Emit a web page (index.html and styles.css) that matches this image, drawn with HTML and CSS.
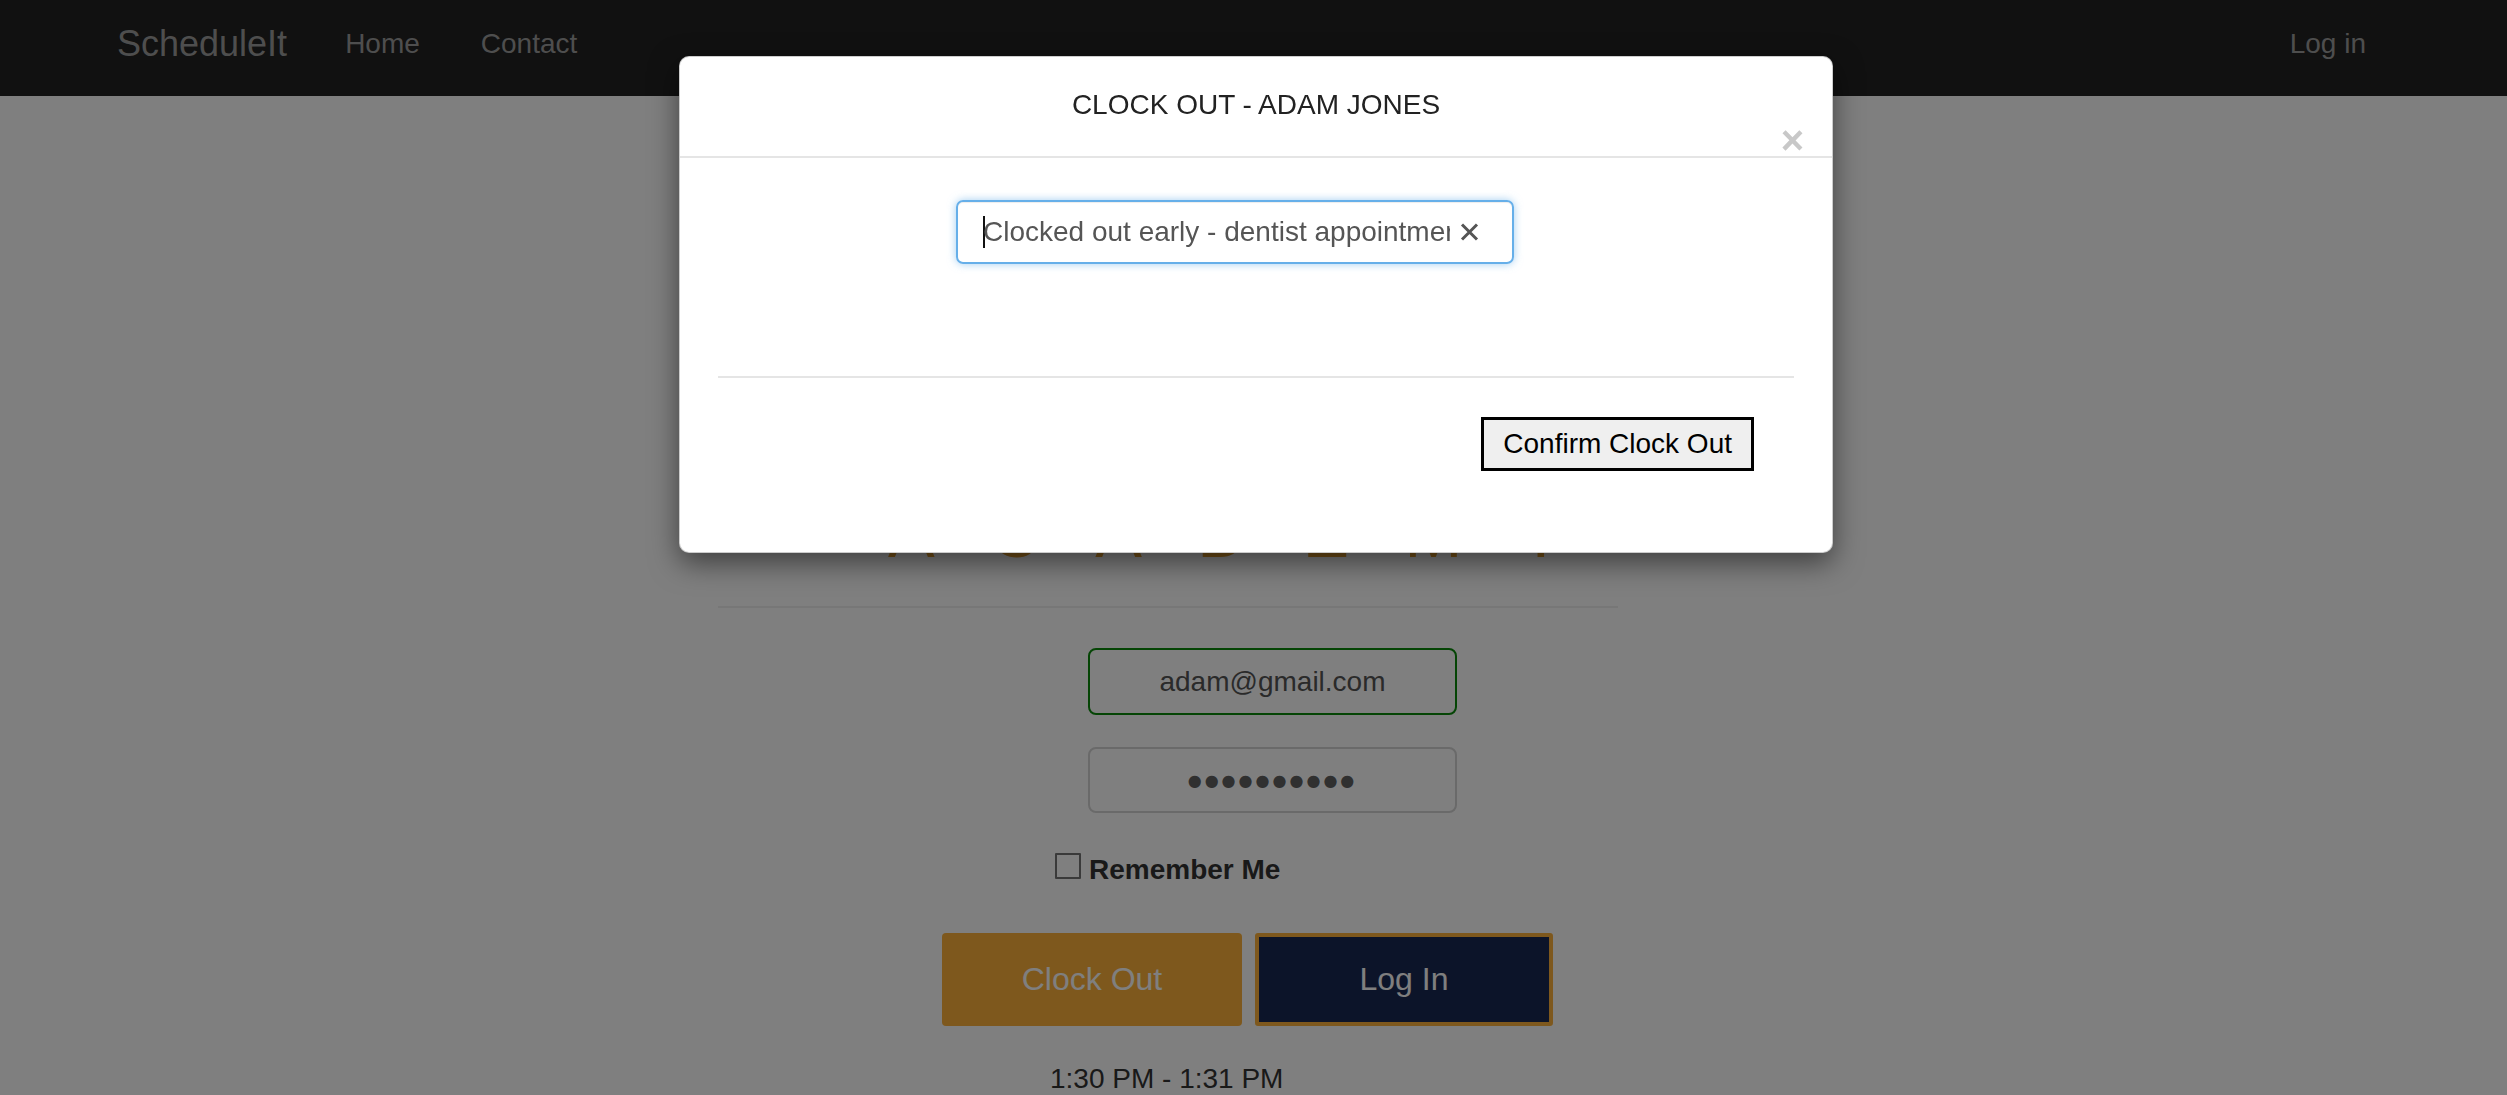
FILE: index.html
```html
<!DOCTYPE html>
<html lang="en">
<head>
<meta charset="utf-8">
<title>ScheduleIt</title>
<link rel="stylesheet" href="styles.css">
</head>
<body>
<nav class="navbar">
  <div class="nav-left">
    <a class="brand">ScheduleIt</a>
    <a class="nav-link nav-home">Home</a>
    <a class="nav-link">Contact</a>
  </div>
  <a class="nav-link">Log in</a>
</nav>

<main class="page">
  <h1 class="academy">ACADEMY</h1>
  <hr class="page-rule">
  <div class="login-form">
    <div class="field field-email">adam@gmail.com</div>
    <div class="field field-password">●●●●●●●●●●</div>
    <label class="remember"><span class="check"></span>Remember Me</label>
    <div class="actions">
      <button class="btn btn-clock">Clock Out</button>
      <button class="btn btn-login">Log In</button>
    </div>
    <p class="time">1:30 PM - 1:31 PM</p>
  </div>
</main>

<div class="backdrop"></div>

<div class="modal">
  <div class="modal-header">
    <h4 class="modal-title">CLOCK OUT - ADAM JONES</h4>
    <span class="close">×</span>
  </div>
  <div class="modal-body">
    <div class="note">
      <span class="caret"></span>
      <span class="note-text">Clocked out early - dentist appointment</span>
      <svg class="clear" width="21" height="18" viewBox="0 0 21 18"><path d="M3 1.5 L18 16.5 M18 1.5 L3 16.5" stroke="#555" stroke-width="3" fill="none"/></svg>
    </div>
    <hr class="modal-rule">
    <div class="modal-actions">
      <button class="confirm">Confirm Clock Out</button>
    </div>
  </div>
</div>
</body>
</html>
```

FILE: styles.css
```css
html, body {
  margin: 0;
  padding: 0;
}
body {
  width: 2507px;
  height: 1095px;
  overflow: hidden;
  position: relative;
  background: #ffffff;
  font-family: "Liberation Sans", Arial, sans-serif;
  color: #333;
}

/* navbar */
.navbar {
  display: flex;
  justify-content: space-between;
  align-items: center;
  height: 96px;
  box-sizing: border-box;
  padding: 0 141px 9px 117px;
  background: #222222;
}
.nav-left {
  display: flex;
  align-items: center;
}
.brand {
  font-size: 36px;
  color: #9d9d9d;
  margin-right: 58px;
}
.nav-link {
  font-size: 28px;
  color: #9d9d9d;
}
.nav-home {
  margin-right: 61px;
}

/* page behind the modal */
.page {
  margin-left: 718px;
  width: 900px;
  padding-top: 402px;
}
.academy {
  margin: 0;
  padding-left: 170px;
  font-size: 70px;
  line-height: 70px;
  font-weight: 400;
  letter-spacing: 55px;
  color: #e8a232;
  white-space: nowrap;
}
.page-rule {
  margin: 38px 0 0;
  border: 0;
  height: 2px;
  background: #eeeeee;
}
.login-form {
  display: flex;
  flex-direction: column;
  align-items: flex-start;
}
.field {
  box-sizing: border-box;
  width: 369px;
  margin-left: 370px;
  border-radius: 8px;
  background: #ffffff;
  text-align: center;
  font-size: 28px;
  color: #555;
}
.field-email {
  margin-top: 40px;
  height: 67px;
  line-height: 63px;
  border: 2px solid #0a8a0a;
}
.field-password {
  margin-top: 32px;
  height: 66px;
  line-height: 64px;
  border: 2px solid #d4d4d4;
  font-family: "DejaVu Sans", sans-serif;
  font-size: 16px;
  letter-spacing: 3px;
  color: #606060;
}
.remember {
  display: block;
  margin: 40px 0 0 337px;
  font-size: 28px;
  line-height: 30px;
  font-weight: 700;
  color: #333;
}
.check {
  display: inline-block;
  vertical-align: baseline;
  box-sizing: border-box;
  width: 26px;
  height: 26px;
  margin-right: 8px;
  border: 2px solid #747474;
  border-radius: 1px;
  background: #fff;
}
.actions {
  display: flex;
  gap: 13px;
  margin: 48px 0 0 224px;
}
.btn {
  box-sizing: border-box;
  height: 93px;
  font-family: "Liberation Sans", Arial, sans-serif;
  font-size: 32px;
  color: #ffffff;
  border-radius: 4px;
  padding: 0;
}
.btn-clock {
  width: 300px;
  background: #fdb13a;
  border: 0;
}
.btn-login {
  width: 298px;
  background: #182852;
  border: 4px solid #fdb13a;
  border-radius: 3px;
}
.time {
  margin: 38px 0 0 332px;
  font-size: 28px;
  line-height: 30px;
  color: #333;
}

/* overlay */
.backdrop {
  position: fixed;
  inset: 0;
  background: rgba(0, 0, 0, 0.5);
}
.modal {
  position: absolute;
  left: 679px;
  top: 56px;
  width: 1154px;
  box-sizing: border-box;
  background: #ffffff;
  border: 1px solid rgba(0, 0, 0, 0.2);
  border-radius: 10px;
  box-shadow: 0 10px 29px rgba(0, 0, 0, 0.5);
}
.modal-header {
  padding: 29px 28px 0;
  border-bottom: 2px solid #e5e5e5;
}
.modal-title {
  margin: 0;
  font-size: 28px;
  line-height: 38px;
  font-weight: 400;
  text-align: center;
  color: #222;
}
.close {
  display: block;
  height: 32px;
  text-align: right;
  font-size: 40px;
  line-height: 32px;
  font-weight: 700;
  color: #c8c8c8;
}
.modal-body {
  padding: 0 38px;
}
.note {
  display: flex;
  align-items: center;
  box-sizing: border-box;
  width: 558px;
  height: 64px;
  margin: 42px 0 0 238px;
  padding: 0 31px 0 25px;
  border: 2px solid #66afe9;
  border-radius: 7px;
  box-shadow: inset 0 1px 1px rgba(0, 0, 0, 0.075), 0 0 9px rgba(102, 175, 233, 0.6);
  font-size: 28px;
  color: #555;
}
.caret {
  width: 2px;
  height: 32px;
  margin-right: -2px;
  background: #111;
  flex: none;
}
.note-text {
  width: 467px;
  overflow: hidden;
  white-space: nowrap;
  flex: none;
}
.clear {
  margin-left: 9px;
  flex: none;
}
.modal-rule {
  margin: 112px 0 0;
  border: 0;
  height: 2px;
  background: #e5e5e5;
}
.modal-actions {
  display: flex;
  justify-content: flex-end;
  padding: 39px 40px 81px 0;
}
.confirm {
  box-sizing: border-box;
  height: 54px;
  padding: 0 19px;
  border: 3px solid #000;
  border-radius: 0;
  background: #efefef;
  font-family: "Liberation Sans", Arial, sans-serif;
  font-size: 28px;
  color: #000;
}
```
